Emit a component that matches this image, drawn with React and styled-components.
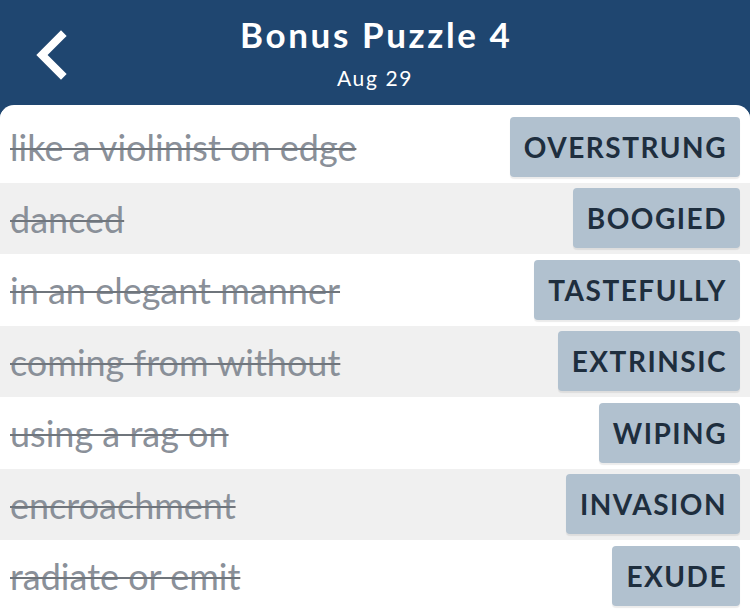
import React from "react";
import styled, { createGlobalStyle } from "styled-components";

const GlobalStyle = createGlobalStyle`
  html, body {
    margin: 0;
    padding: 0;
    background: #1f4670;
    font-family: "Lato", "Noto Sans", sans-serif;
  }
`;

const clues = [
  { clue: "like a violinist on edge", answer: "OVERSTRUNG" },
  { clue: "danced", answer: "BOOGIED" },
  { clue: "in an elegant manner", answer: "TASTEFULLY" },
  { clue: "coming from without", answer: "EXTRINSIC" },
  { clue: "using a rag on", answer: "WIPING" },
  { clue: "encroachment", answer: "INVASION" },
  { clue: "radiate or emit", answer: "EXUDE" },
];

const BackIcon = () => (
  <svg width="36" height="50" viewBox="0 0 36 50" fill="none">
    <path d="M29 6 L10 25 L29 44" stroke="#ffffff" strokeWidth="8" strokeLinecap="square" />
  </svg>
);

const App = () => {
  return (
    <>
      <GlobalStyle />
      <Page>
        <Header>
          <BackButton>
            <BackIcon />
          </BackButton>
          <Title>Bonus Puzzle 4</Title>
          <SubTitle>Aug 29</SubTitle>
        </Header>
        <Card>
          {clues.map((item, i) => (
            <Row key={item.answer} $alt={i % 2 === 1}>
              <Clue>{item.clue}</Clue>
              <Answer>{item.answer}</Answer>
            </Row>
          ))}
        </Card>
      </Page>
    </>
  );
};

const Page = styled.div`
  width: 750px;
  height: 613px;
  overflow: hidden;
  background: #1f4670;
`;

const Header = styled.div`
  position: relative;
  height: 105px;
  display: flex;
  flex-direction: column;
  align-items: center;
  color: #ffffff;
`;

const BackButton = styled.div`
  position: absolute;
  left: 32px;
  top: 30px;
  cursor: pointer;
`;

const Title = styled.h1`
  margin: 13px 0 0;
  font-size: 35px;
  font-weight: 700;
  line-height: 42px;
  letter-spacing: 2.6px;
  padding-left: 2.6px;
`;

const SubTitle = styled.p`
  margin: 8px 0 0;
  font-size: 21px;
  line-height: 30px;
  letter-spacing: 1.6px;
`;

const Card = styled.div`
  background: #ffffff;
  border-radius: 14px 14px 0 0;
  overflow: hidden;
  height: 508px;
  padding-top: 6px;
`;

const Row = styled.div`
  height: 71.5px;
  display: flex;
  align-items: center;
  justify-content: space-between;
  padding: 0 10px;
  background: ${(p) => (p.$alt ? "#f0f0f0" : "#ffffff")};
`;

const Clue = styled.span`
  font-size: 36px;
  line-height: 44px;
  margin-top: 1px;
  color: #8a9099;
  text-decoration: line-through;
  text-decoration-color: #6f757c;
  text-decoration-thickness: 2px;
`;

const Answer = styled.span`
  height: 60px;
  display: flex;
  align-items: center;
  padding: 0 13px 0 14px;
  background: #b1c1cf;
  border-radius: 4px;
  box-shadow: 0 2px 1px rgba(0, 0, 0, 0.08);
  font-size: 28px;
  font-weight: 700;
  color: #1e2e3e;
  letter-spacing: 1.5px;
`;

export default App;
